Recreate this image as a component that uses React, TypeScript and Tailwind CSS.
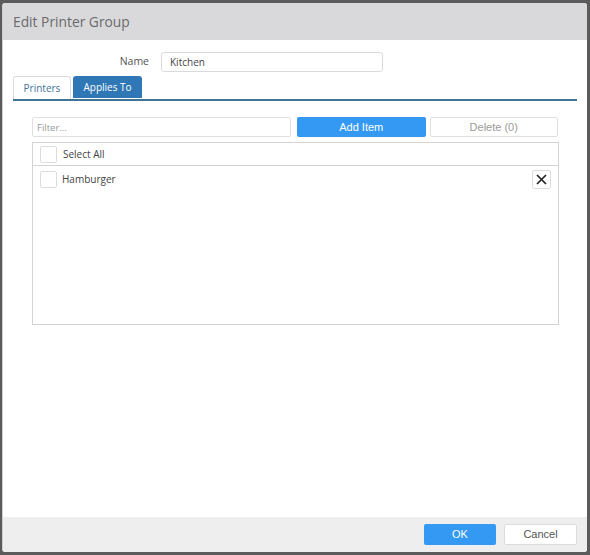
import React from "react";

const sans = "font-['Open_Sans','Noto_Sans',sans-serif]";
const arial = "font-['Liberation_Sans',Arial,sans-serif]";

const Check = () => (
  <span className="inline-block w-[17px] h-[17px] border border-[#dcdcdc] bg-white rounded-[2px]" />
);

const App = () => {
  return (
    <div className="w-[590px] h-[555px] bg-[#5b5b5b] pt-[3px] pl-[2px]">
      <div className="w-[585px] h-[549px] bg-white flex flex-col rounded-[3px] overflow-hidden border-l border-[#d0d0d0]">
        {/* header */}
        <div className="h-[37px] bg-[#d9d9dc] flex items-center px-[10px] pt-[2px]">
          <span className={`${sans} text-[13.8px] text-[#6a6a6a]`}>Edit Printer Group</span>
        </div>

        {/* body */}
        <div className="flex-1">
          <div className="mt-[12px] flex items-center">
            <span className={`${sans} w-[146px] text-right text-[10.5px] text-[#555]`}>Name</span>
            <input
              type="text"
              defaultValue="Kitchen"
              className={`${sans} ml-[12px] w-[222px] h-[20px] border border-[#dadada] rounded-[3px] px-[8px] text-[10px] text-[#444] outline-none`}
            />
          </div>

          <div className="mt-[4px] ml-[10px] mr-[10px] flex gap-[2px] border-b-2 border-[#3f7597]">
            <button className={`${sans} w-[58px] h-[23px] border border-[#dcdcdc] border-b-0 rounded-t-[3px] text-[10px] text-[#3f73a0] bg-white`}>
              Printers
            </button>
            <button className={`${sans} w-[69px] h-[22px] bg-[#2f78b5] rounded-t-[3px] text-[10px] text-white mb-[1px]`}>
              Applies To
            </button>
          </div>

          <div className="mx-[29px] mt-[16px]">
            <div className="flex items-center h-[20px]">
              <input
                type="text"
                placeholder="Filter..."
                className={`${sans} w-[260px] h-[20px] border border-[#e0e0e0] rounded-[2px] px-[4px] text-[9.5px] placeholder:text-[#9a9a9a] outline-none`}
              />
              <button className={`${arial} ml-[6px] w-[129px] h-[20px] bg-[#3399f3] rounded-[2px] text-[11px] text-white`}>
                Add Item
              </button>
              <button className={`${arial} ml-[4px] w-[129px] h-[20px] border border-[#e0e0e0] rounded-[2px] bg-white text-[11px] text-[#9a9a9a]`}>
                Delete (0)
              </button>
            </div>

            <div className="mt-[5px] w-[527px] h-[183px] border border-[#d3d3d3]">
              <div className="h-[23px] flex items-center pl-[7px] border-b border-[#d3d3d3]">
                <Check />
                <span className={`${sans} ml-[6px] text-[10px] text-[#444]`}>Select All</span>
              </div>
              <div className="h-[27px] flex items-center pl-[7px] pr-[7px]">
                <Check />
                <span className={`${sans} ml-[5px] text-[10px] text-[#444]`}>Hamburger</span>
                <button className="ml-auto w-[19px] h-[19px] border border-[#dcdcdc] rounded-[2px] bg-white flex items-center justify-center">
                  <svg width="11" height="11" viewBox="0 0 11 11">
                    <path d="M1 1L10 10M10 1L1 10" stroke="#222" strokeWidth="1.7" />
                  </svg>
                </button>
              </div>
            </div>
          </div>
        </div>

        {/* footer */}
        <div className="h-[35px] bg-[#eeeeee] flex items-center justify-end gap-[8px] pr-[10px]">
          <button className={`${arial} w-[72px] h-[21px] bg-[#3399f3] rounded-[2px] text-[11px] text-white`}>OK</button>
          <button className={`${arial} w-[73px] h-[21px] bg-white border border-[#dcdcdc] rounded-[2px] text-[11px] text-[#555]`}>
            Cancel
          </button>
        </div>
      </div>
    </div>
  );
};

export default App;
